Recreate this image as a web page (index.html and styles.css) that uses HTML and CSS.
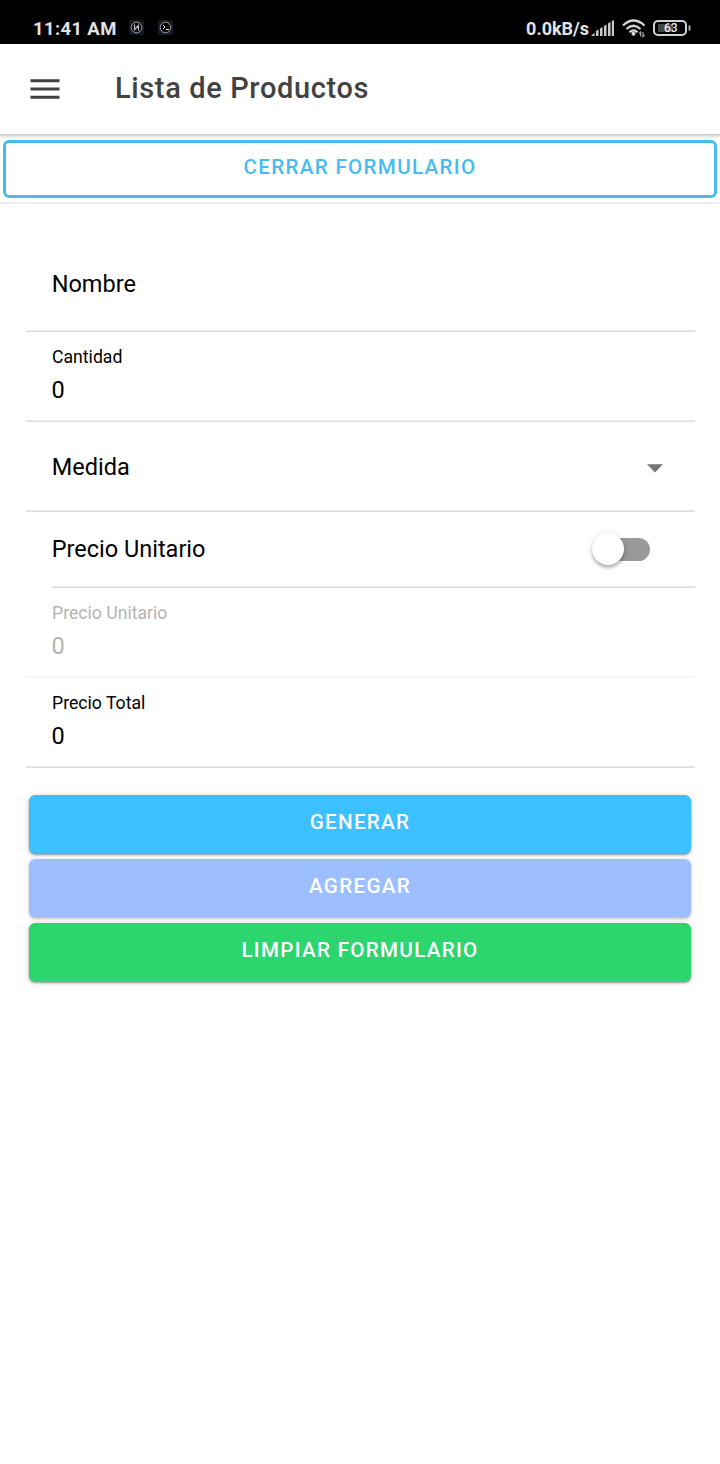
FILE: index.html
```html
<!DOCTYPE html>
<html lang="es">
<head>
<meta charset="utf-8">
<title>Lista de Productos</title>
<link rel="stylesheet" href="styles.css">
</head>
<body>
<div class="status">
  <span class="clock">11:41 AM</span>
  <svg class="notif" width="15" height="15" viewBox="0 0 15 15"><rect width="15" height="15" rx="2" fill="#171a24"/><circle cx="7.500" cy="7.500" r="5.300" fill="#08090c" stroke="#9ba5ac"/><path d="M5.500 4.500v6M9.500 4.500v6M6 9l3-3" stroke="#bfc0bd" stroke-width="1.200"/></svg>
  <svg class="notif second" width="15" height="15" viewBox="0 0 15 15"><rect width="15" height="15" rx="2" fill="#171a24"/><circle cx="7.500" cy="7.500" r="5.300" fill="#000" stroke="#9ba5ac"/><path d="M5 5l2 2-2 2M8 9.500h3" fill="none" stroke="#eee"/></svg>
  <span class="speed">0.0kB/s</span>
  <svg class="signal" width="24" height="16" viewBox="0 0 24 16"><path d="M0 16L3.500 12.500V16zM5 16v-5l2.500-1.500V16zM9 16V8.500L11.500 7v9zM13 16V6l2.500-1.500V16zM17 16V3.500L19.500 2v14zM20.800 16V1L23 0v16z" fill="#c9c9c9"/></svg>
  <svg class="wifi" width="24" height="19" viewBox="0 0 24 19"><g fill="none" stroke="#d5d5d5" stroke-width="2.200"><path d="M1 6.500Q11.500-3.500 22.500 6.500"/><path d="M4.500 10Q11.500 3.500 18.500 10"/><path d="M7.500 13.200Q11.500 9.500 15.500 13.200"/></g><circle cx="11.500" cy="14.800" r="2" fill="#d5d5d5"/><path d="M18.700 17.500v-4.500l-1.500 1.500M21 13v4.500l1.500-1.500" fill="none" stroke="#aaa" stroke-width="1.200"/></svg>
  <svg class="battery" width="38" height="16" viewBox="0 0 38 16"><rect x="1" y="1" width="32" height="14" rx="4" fill="none" stroke="#d0d0d0" stroke-width="2"/><rect x="5" y="4" width="15" height="8" fill="#444"/><path d="M36.500 5.500v5" stroke="#aaa" stroke-width="2"/><text x="17.800" y="12.200" text-anchor="middle" class="level">63</text></svg>
</div>
<header class="header">
  <svg class="menu" width="30" height="20" viewBox="0 0 30 20"><path d="M.5 1.800h29M.5 10h29M.5 18.200h29" stroke="#424242" stroke-width="3.100"/></svg>
  <h1 class="title">Lista de Productos</h1>
</header>
<div class="toolbar"><button class="btn outline">CERRAR FORMULARIO</button></div>
<main class="form">
  <div class="item"><span class="label nombre">Nombre</span></div>
  <div class="item stacked"><span class="caption">Cantidad</span><span class="value">0</span></div>
  <div class="item"><span class="label">Medida</span><svg class="arrow" width="16" height="9" viewBox="0 0 16 9"><path d="M0 .3h16L8 8.500z" fill="#757575"/></svg></div>
  <div class="item short"><span class="label">Precio Unitario</span><span class="toggle"><span class="knob"></span></span></div>
  <div class="item stacked disabled"><span class="caption">Precio Unitario</span><span class="value">0</span></div>
  <div class="item stacked"><span class="caption">Precio Total</span><span class="value">0</span></div>
  <div class="actions">
    <button class="btn primary">GENERAR</button>
    <button class="btn secondary">AGREGAR</button>
    <button class="btn success">LIMPIAR FORMULARIO</button>
  </div>
</main>
</body>
</html>
```
FILE: styles.css
```css
* { box-sizing: border-box; }
body { margin: 0; min-height: 1464px; background: #fff; color: #000; font-family: Roboto, sans-serif; }
.status { height: 44px; background: #000; color: #e2e2e2; display: flex; padding: 0 29px 0 33px; align-items: flex-start; }
.clock { font-size: 18.500px; letter-spacing: .35px; font-weight: 700; line-height: 20px; margin-top: 19px; width: 96px; white-space: nowrap; }
.notif { margin-top: 20px; }
.second { margin-left: 14px; }
.speed { font-size: 18px; font-weight: 700; line-height: 20px; margin: 19px 2px 0 auto; white-space: nowrap; }
.signal { margin-top: 20px; }
.wifi { margin: 19px 7px 0 7px; }
.battery { margin-top: 20px; }
.level { font: 500 12px Roboto, sans-serif; fill: #eee; }
.header { height: 90px; display: flex; align-items: center; padding-left: 30px; background: #fff; position: relative; box-shadow: 0 2px 2px #d0d0d0, 0 4px 4px #eee; }
.menu { margin-right: 55px; }
.title { margin: -3px 0 0; font-size: 29px; line-height: 36px; font-weight: 500; letter-spacing: .63px; color: #424242; }
.toolbar { height: 70px; padding: 6px 3px; border-bottom: 2px solid #ececec; }
.btn { display: block; width: 100%; height: 58px; margin: 0; padding: 0 0 5px; border: 0; border-radius: 6px; font: 500 20.600px/24px Roboto, sans-serif; letter-spacing: 1.300px; color: #fff; text-align: center; }
.outline { position: relative; background: #fff; border: 3px solid #48bcf0; color: #48bcf0; }
.form { padding: 38px 25px 0 26px; }
.item { height: 90px; display: flex; align-items: center; padding: 0 32px 0 26px; background: linear-gradient(#ebebeb 50%, #dcdcdc 50%) bottom / 100% 2px no-repeat; }
.label, .value { font-size: 23.500px; line-height: 28px; }
.label { margin-left: -.3px; }
.nombre { margin-top: -7px; }
.stacked { flex-direction: column; align-items: flex-start; padding-top: 14px; }
.caption { font-size: 17.650px; line-height: 22px; }
.value { margin: 8px 0 0 -.5px; }
.arrow { margin-left: auto; margin-top: 3px; }
.short { height: 76px; margin-left: 26px; padding: 0 45px 2px 0; }
.toggle { margin-left: auto; width: 57px; height: 23px; border-radius: 12px; background: #999; position: relative; }
.knob { position: absolute; left: -1px; top: -5px; width: 32px; height: 32px; border-radius: 50%; background: #fff; box-shadow: 0 3px 3px rgba(0,0,0,.22), 0 1px 6px rgba(0,0,0,.16); }
.disabled { opacity: .3; }
.actions { display: flex; flex-direction: column; gap: 6px; padding: 27px 4px 0 3px; }
.primary, .secondary, .success { box-shadow: 0 2px 2px rgba(0,0,0,.35), 0 1px 6px rgba(0,0,0,.18); }
.primary { background: #3dc0ff; }
.secondary { background: #9dbeff; box-shadow: 0 2px 2px rgba(0,0,0,.18), 0 1px 6px rgba(0,0,0,.1); }
.success { background: #2dd56f; }
```
